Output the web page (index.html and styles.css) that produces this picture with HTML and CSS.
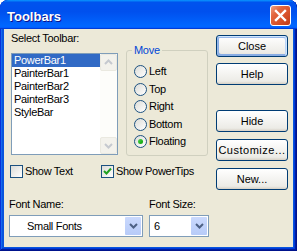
FILE: index.html
```html
<!DOCTYPE html>
<html lang="en">
<head>
    <meta charset="UTF-8">
    <title>Toolbars</title>
    <link rel="stylesheet" href="styles.css">
</head>
<body>

    <div class="window">
        <div class="titlebar">
            <span class="title">Toolbars</span>
            <span class="close-btn">
                <svg width="19" height="19" viewBox="0 0 19 19"><path d="M5 5L14 14M14 5L5 14" stroke="#fff" stroke-width="2.4" stroke-linecap="square"/></svg>
            </span>
        </div>

        <div class="content">
            <div class="left">
                <div class="top">
                    <div class="picker">
                        <div class="label">Select Toolbar:</div>
                        <div class="listbox">
                            <ul class="items">
                                <li class="selected">PowerBar1</li>
                                <li>PainterBar1</li>
                                <li>PainterBar2</li>
                                <li>PainterBar3</li>
                                <li>StyleBar</li>
                            </ul>
                            <div class="scrollbar">
                                <div class="sb-btn">
                                    <svg width="15" height="15" viewBox="0 0 15 15"><path d="M4 9L7.5 5.5L11 9" stroke="#c5c9cf" stroke-width="2" fill="none"/></svg>
                                </div>
                                <div class="sb-track"></div>
                                <div class="sb-btn">
                                    <svg width="15" height="15" viewBox="0 0 15 15"><path d="M4 6L7.5 9.5L11 6" stroke="#c5c9cf" stroke-width="2" fill="none"/></svg>
                                </div>
                            </div>
                        </div>
                    </div>

                    <fieldset class="move">
                        <legend>Move</legend>
                        <div class="radios">
                            <div class="radio"><span class="radio-dot"></span>Left</div>
                            <div class="radio"><span class="radio-dot"></span>Top</div>
                            <div class="radio"><span class="radio-dot"></span>Right</div>
                            <div class="radio"><span class="radio-dot"></span>Bottom</div>
                            <div class="radio"><span class="radio-dot on"></span>Floating</div>
                        </div>
                    </fieldset>
                </div>

                <div class="checks">
                    <div class="check first"><span class="box"></span>Show Text</div>
                    <div class="check"><span class="box">
                        <svg width="11" height="11" viewBox="0 0 11 11"><path d="M2 5L4.5 7.5L9 2.5" stroke="#21a121" stroke-width="2" fill="none"/></svg>
                    </span>Show PowerTips</div>
                </div>

                <div class="fonts">
                    <div class="field name">
                        <div class="label">Font Name:</div>
                        <div class="combo">
                            <span class="value wide">Small Fonts</span>
                            <span class="combo-btn">
                                <svg width="9" height="6" viewBox="0 0 9 6"><path d="M1 1L4.5 4.5L8 1" stroke="#4d6185" stroke-width="2" fill="none"/></svg>
                            </span>
                        </div>
                    </div>
                    <div class="field size">
                        <div class="label">Font Size:</div>
                        <div class="combo">
                            <span class="value">6</span>
                            <span class="combo-btn">
                                <svg width="9" height="6" viewBox="0 0 9 6"><path d="M1 1L4.5 4.5L8 1" stroke="#4d6185" stroke-width="2" fill="none"/></svg>
                            </span>
                        </div>
                    </div>
                </div>
            </div>

            <div class="buttons">
                <button class="default">Close</button>
                <button>Help</button>
                <button class="gap">Hide</button>
                <button class="wide-text">Customize...</button>
                <button>New...</button>
            </div>
        </div>
    </div>

</body>
</html>
```

FILE: styles.css
```css
* {
    box-sizing: border-box;
}
html, body {
    margin: 0;
    padding: 0;
    background: #fff;
}
body {
    font-family: "Liberation Sans", Arial, sans-serif;
    font-size: 11px;
    line-height: 13px;
    color: #000;
}
.window {
    width: 297px;
    height: 251px;
    display: flex;
    flex-direction: column;
    background: #0855dd;
    border-radius: 8px 8px 0 0;
    overflow: hidden;
    box-shadow: inset -1px -1px #00138c, inset 1px 1px #0831d9, inset -2px -2px #001ea0, inset 2px 2px #166aee, inset -3px -3px #003bda, inset 3px 3px #0855dd;
}
.titlebar {
    height: 29px;
    flex: none;
    display: flex;
    justify-content: space-between;
    align-items: flex-start;
    padding: 0 6px 0 7px;
    border-radius: 8px 8px 0 0;
    background: linear-gradient(180deg, #0997ff, #0053ee 8%, #0050ee 40%, #0066ff 88%, #0066ff 93%, #005bff 95%, #003dd7 96%, #003dd7);
}
.title {
    margin-top: 9px;
    font-size: 13px;
    line-height: 15px;
    font-weight: bold;
    color: #fff;
    text-shadow: 1px 1px #0f1089;
}
.close-btn {
    margin-top: 5px;
    width: 21px;
    height: 21px;
    border: 1px solid #fff;
    border-radius: 3px;
    background: linear-gradient(135deg, #f0a184 0%, #e3673f 30%, #d9532c 60%, #c03b16 100%);
    display: flex;
}
.content {
    flex: 1;
    margin: 0 4px 4px;
    background: #ece9d8;
    display: flex;
}
.left {
    width: 212px;
    padding: 3px 0 0 5px;
}
.top {
    display: flex;
    align-items: flex-start;
}
.picker {
    margin-left: 2px;
}
.label {
    height: 13px;
    letter-spacing: -0.3px;
}
.picker .label {
    margin-bottom: 8px;
}
.listbox {
    width: 107px;
    height: 102px;
    border: 1px solid #7f9db9;
    background: #fff;
    display: flex;
}
.items {
    flex: 1;
    list-style: none;
    margin: 0;
    padding: 0;
}
.items li {
    height: 13px;
    padding-left: 2px;
    white-space: nowrap;
    letter-spacing: -0.3px;
}
.items .selected {
    background: #316ac5;
    color: #fff;
}
.scrollbar {
    width: 17px;
    display: flex;
    flex-direction: column;
    background: #fdfdfa;
}
.sb-btn {
    height: 17px;
    border: 1px solid #eae9e0;
    border-radius: 2px;
    background: #f3f2ec;
    display: flex;
    align-items: center;
    justify-content: center;
}
.sb-track {
    flex: 1;
}
.move {
    margin: 12px 0 0 8px;
    width: 82px;
    height: 112px;
    min-width: 0;
    border: 1px solid #d0d0bf;
    border-radius: 3px;
    padding: 0 0 0 5px;
}
.move legend {
    padding: 0 2px;
    color: #0046d5;
    line-height: 13px;
    letter-spacing: -0.3px;
}
.radios {
    margin-top: 6px;
}
.radio {
    display: flex;
    align-items: center;
    height: 17.5px;
    margin-left: 2px;
    letter-spacing: -0.3px;
}
.radio-dot {
    width: 13px;
    height: 13px;
    flex: none;
    margin-right: 2px;
    border: 1px solid #1d5281;
    border-radius: 50%;
    background: linear-gradient(135deg, #dcdcd7, #fff);
    position: relative;
}
.radio-dot.on::after {
    content: "";
    position: absolute;
    left: 3px;
    top: 3px;
    width: 5px;
    height: 5px;
    border-radius: 50%;
    background: linear-gradient(135deg, #55d551, #009e00);
}
.checks {
    display: flex;
    height: 13px;
    margin: 9px 0 0 1px;
}
.check {
    display: flex;
    align-items: center;
    letter-spacing: -0.3px;
}
.check.first {
    width: 91px;
}
.box {
    width: 13px;
    height: 13px;
    flex: none;
    margin-right: 2px;
    border: 1px solid #1c5180;
    background: linear-gradient(135deg, #dcdcd7, #fff);
    display: flex;
}
.fonts {
    display: flex;
    margin-top: 20px;
}
.field.name {
    width: 140px;
}
.combo {
    margin-top: 4px;
    height: 22px;
    border: 1px solid #7f9db9;
    background: #fff;
    display: flex;
    align-items: center;
}
.name .combo {
    width: 134px;
}
.size .combo {
    width: 60px;
}
.value {
    padding-left: 4px;
    letter-spacing: -0.3px;
}
.value.wide {
    padding-left: 17px;
}
.combo-btn {
    margin-left: auto;
    margin-right: 1px;
    width: 16px;
    height: 18px;
    border-radius: 1px;
    background: linear-gradient(180deg, #cad9fd, #b7cbf8);
    display: flex;
    align-items: center;
    justify-content: center;
}
.buttons {
    display: flex;
    flex-direction: column;
    padding-top: 6px;
}
button {
    width: 72px;
    height: 22px;
    margin: 7px 0 0;
    padding: 0;
    font-family: inherit;
    font-size: 11px;
    color: #000;
    border: 1px solid #003c74;
    border-radius: 3px;
    background: linear-gradient(180deg, #fff, #ecebe6 86%, #d6d0c5);
}
button.default {
    margin-top: 0;
    box-shadow: inset -1px 1px #cee7ff, inset 1px 2px #98b8ea, inset -2px 2px #bcd4f6, inset 1px -1px #89ade4, inset 2px -2px #89ade4;
}
button.default + button {
    margin-top: 6px;
}
button.gap {
    margin-top: 25px;
}
button.wide-text {
    letter-spacing: 0.5px;
}
```
